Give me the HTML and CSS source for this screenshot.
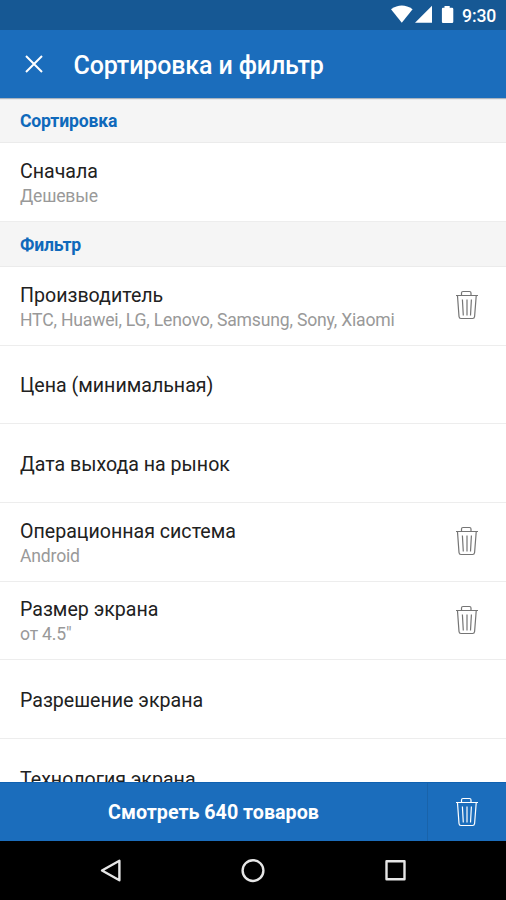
FILE: index.html
```html
<!DOCTYPE html>
<html lang="ru">
<head>
<meta charset="utf-8">
<title>Сортировка и фильтр</title>
<link rel="stylesheet" href="styles.css">
</head>
<body>
<svg width="0" height="0" class="defs">
  <symbol id="trash" viewBox="0 0 24 30">
    <path d="M1 5.5H23M6.5 5V3Q6.5 1.5 8 1.5H14.5Q16 1.5 16 3V5M2.5 6L4 26.5Q4.1 28.5 6 28.5H17.6Q19.4 28.5 19.6 26.5L21.2 6M7.4 9.5L8.3 25.5M12 9.5V25.5M16.4 9.5L15.5 25.5" fill="none" stroke="currentColor" stroke-width="1.2"/>
  </symbol>
</svg>
<div class="screen">
  <div class="status">
    <svg class="signals" width="66" height="20" viewBox="0 0 66 20" fill="#fff">
      <path d="M0 4.3Q10.8-3.2 21.6 4.3L10.8 17.8Z"/>
      <path d="M24 17.8L41 .8V17.8Z"/>
      <path d="M53.5 1H58.7V2.8H61Q62.3 2.8 62.3 4V16.8Q62.3 18 61 18H52Q50.9 18 50.9 16.8V4Q50.9 2.8 52 2.8H53.5Z"/>
    </svg>
    <span class="clock">9:30</span>
  </div>
  <header class="appbar">
    <svg class="close" width="20" height="20" viewBox="0 0 20 20"><path d="M2 2L18 18M18 2L2 18" stroke="#fff" stroke-width="2"/></svg>
    <h1>Сортировка и фильтр</h1>
  </header>
  <main class="list">
    <h2 class="section">Сортировка</h2>
    <div class="row"><div class="label"><div class="name">Сначала</div><div class="value">Дешевые</div></div></div>
    <h2 class="section">Фильтр</h2>
    <div class="row"><div class="label"><div class="name">Производитель</div><div class="value">HTC, Huawei, LG, Lenovo, Samsung, Sony, Xiaomi</div></div><svg class="trash"><use href="#trash"/></svg></div>
    <div class="row"><div class="label"><div class="name">Цена (минимальная)</div></div></div>
    <div class="row"><div class="label"><div class="name">Дата выхода на рынок</div></div></div>
    <div class="row"><div class="label"><div class="name">Операционная система</div><div class="value">Android</div></div><svg class="trash"><use href="#trash"/></svg></div>
    <div class="row"><div class="label"><div class="name">Размер экрана</div><div class="value">от 4.5"</div></div><svg class="trash"><use href="#trash"/></svg></div>
    <div class="row"><div class="label"><div class="name">Разрешение экрана</div></div></div>
    <div class="row"><div class="label"><div class="name">Технология экрана</div></div></div>
  </main>
  <footer class="actions">
    <div class="show"><span>Смотреть 640 товаров</span></div>
    <div class="clear"><svg class="trash"><use href="#trash"/></svg></div>
  </footer>
  <nav class="navbar">
    <svg width="26" height="26" viewBox="0 0 26 26"><path d="M22.4 2.8V22.2L5 12.5Z"/></svg>
    <svg width="26" height="26" viewBox="0 0 26 26"><circle cx="13" cy="12.6" r="10.4"/></svg>
    <svg width="26" height="26" viewBox="0 0 26 26"><rect x="3.5" y="3.3" width="18" height="18"/></svg>
  </nav>
</div>
</body>
</html>
```
FILE: styles.css
```css
* { box-sizing: border-box; }
body { margin: 0; font-family: Roboto, "Noto Sans", sans-serif; }
.defs { position: absolute; }
.screen { width: 506px; height: 900px; display: flex; flex-direction: column; overflow: hidden; background: #fff; }
.status { flex: none; height: 29.5px; background: #165894; display: flex; align-items: flex-start; padding: 5px 0 0 391px; }
.signals { flex: none; }
.clock { color: #fff; font-size: 17.6px; font-weight: 500; line-height: 22px; letter-spacing: -.1px; margin-left: 5px; }
.appbar { flex: none; height: 68.5px; background: #1b6dbc; display: flex; align-items: center; padding: 2px 0 0 24px; box-shadow: 0 1px 1px #aab4bf; position: relative; }
.close { margin-top: -2px; }
h1 { margin: 2px 0 0 29.5px; font-size: 25px; font-weight: 500; letter-spacing: -.13px; color: #fff; line-height: 30px; white-space: nowrap; }
.list { flex: 1; min-height: 0; overflow: hidden; padding-top: .5px; background: #fff; }
.section { margin: 0; height: 44.9px; display: flex; align-items: center; padding: 1.5px 20px 0; background: #f5f5f5; border-bottom: 1px solid #ebebeb; font-size: 17.6px; font-weight: 700; letter-spacing: -.17px; color: #0f69bb; line-height: 22px; }
.row { height: 78.7px; display: flex; align-items: center; justify-content: space-between; padding: 0 27px 0 20px; border-bottom: 1px solid #ededed; }
.label { padding-top: 2.2px; }
.name { font-size: 19.6px; line-height: 25px; color: #212121; white-space: nowrap; }
.value { font-size: 17.6px; line-height: 25px; letter-spacing: -.19px; color: #999; white-space: nowrap; }
.label:has(.value) { padding-top: 3.6px; }
.trash { width: 24px; height: 30px; color: #757575; flex: none; margin-top: -1px; }
.actions { flex: none; height: 59px; display: flex; background: #1b6dbc; color: #fff; border-top: 1px solid #0f61b1; }
.show { width: 427px; display: flex; align-items: center; justify-content: center; padding-top: 2px; font-size: 19.7px; font-weight: 700; line-height: 24px; white-space: nowrap; }
.clear { flex: 1; display: flex; align-items: center; justify-content: center; border-left: 1px solid #1963aa; }
.clear .trash { color: #fff; margin-top: -1px; }
.navbar { flex: none; height: 59px; background: #000; display: flex; align-items: center; justify-content: space-between; padding: 0 97px; }
.navbar svg { fill: none; stroke: #e6e6e6; stroke-width: 2.4; stroke-linejoin: round; }
```
